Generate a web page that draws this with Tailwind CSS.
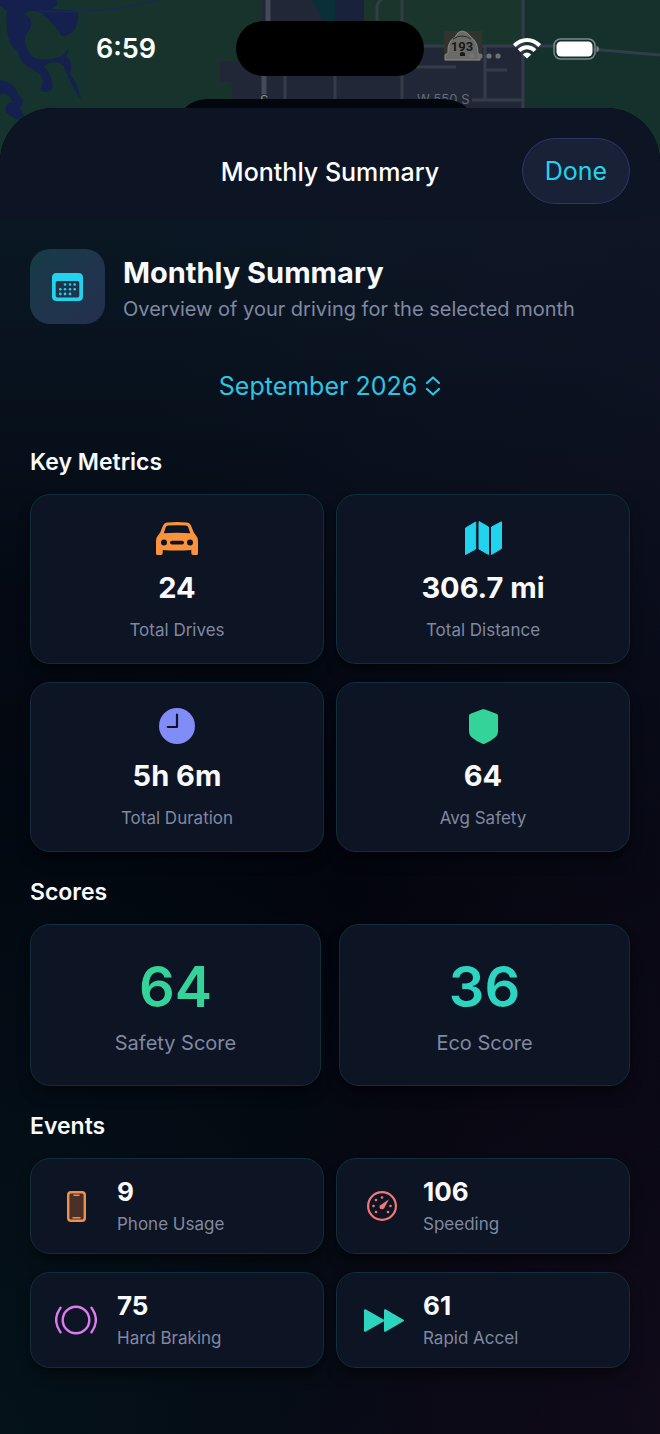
<!DOCTYPE html>
<html lang="en">
<head>
    <meta charset="UTF-8">
    <meta name="viewport" content="width=device-width, initial-scale=1.0">
    <title>Monthly Summary</title>
    <script src="https://cdn.jsdelivr.net/npm/@tailwindcss/browser@4"></script>
</head>
<body class="bg-[#14312c] font-['Inter','Liberation_Sans',sans-serif] text-slate-50">
    <div class="relative min-h-screen flex flex-col">

        <!-- Map behind the sheet -->
        <svg class="absolute inset-x-0 top-0 w-full h-[200px]" viewBox="0 0 660 200" preserveAspectRatio="xMidYMin slice" aria-hidden="true">
            <rect width="660" height="200" fill="#18332b"/>
            <path d="M0 0h92v200H0z" fill="#17332d"/>
            <path d="M525 0h135v200H525z" fill="#14312c"/>
            <path d="M0 0H56Q60 6 50 9L78 11Q80 34 62 36Q54 24 42 13Q30 8 24 14Q38 22 26 34Q22 46 34 58Q48 62 62 56L69 48L66 57Q74 62 70 74Q78 84 81 100Q70 84 64 66Q56 58 44 66Q54 78 52 90Q44 94 40 90Q48 78 34 70Q20 64 18 52Q8 44 7 30Q6 18 7 10L0 6Z" fill="#14204d"/>
            <path d="M0 80Q14 82 18 94Q26 100 20 108L27 122Q14 120 6 112Q4 104 12 102Q10 92 0 94Z" fill="#14204d"/>
            <path d="M40 11Q110 14 158 0" stroke="#172a52" stroke-width="1.5" fill="none"/>
            <path d="M220 61H262V0H364V45H525V140H245Q230 98 232 82H220Z" fill="#212736"/>
            <path d="M364 0H525V45H364Z" fill="#1a352b"/>
            <path d="M312 0H335V30H328Z" fill="#0b2f39"/>
            <path d="M335 0H364V45H335Z" fill="#19223a"/>
            <g stroke="#343c49" stroke-width="3" fill="none">
                <path d="M268 0V62L264 72V94" stroke="#454a58" stroke-width="5"/>
                <path d="M285 70V100M335 70V100M402 0V100M377 30V6Q378 1 382 0"/>
                <path d="M523 0V130M402 46H555L660 55M402 67H456M485 46V100M485 70H507M472 100H523"/>
            </g>
            <text x="417" y="104" font-size="13" fill="#666c79">W 550 S</text>
            <text x="260" y="105" font-size="13" fill="#8b8f99">S</text>
            <!-- Highway 193 shield -->
            <rect x="444" y="31" width="38" height="30" fill="#31332f"/>
            <path d="M445 60V55L448 53Q447 42 455 37Q458 31 462 31Q467 31 471 37Q478 42 478 53L480 55V60Z" fill="#6a6b68" stroke="#888984"/>
            <path d="M453 39Q462 33 471 39" stroke="#2b2c2b" fill="none"/>
            <text x="462" y="51" font-size="13" font-weight="700" font-family="Roboto" text-anchor="middle" fill="#171817">193</text>
            <path d="M460 56V53Q462 51 465 53V56Z" fill="#171817"/>
            <!-- Sheet stacked underneath -->
            <path d="M182 112Q190 99 210 99H440Q462 99 470 112Z" fill="#02070e"/>
        </svg>

        <!-- Status bar -->
        <div class="relative grid grid-cols-[1fr_188px_1fr] items-center pt-[21px] pb-8">
            <div class="pl-4 text-center text-[27px] leading-8 font-semibold text-white">6:59</div>
            <div class="h-[55px] rounded-full bg-black"></div>
            <div class="flex items-center justify-center gap-3 pr-4">
                <svg class="w-8 h-2 mt-3.5" viewBox="0 0 32 8" fill="#6d7478" aria-hidden="true">
                    <circle cx="3" cy="4" r="2.6"/><circle cx="11" cy="4" r="2.6"/><circle cx="20" cy="4" r="2.6"/><circle cx="29" cy="4" r="2.6"/>
                </svg>
                <svg class="w-7 h-[21px]" viewBox="0 0 28 21" fill="none" stroke="#fff" stroke-width="4" aria-label="Wi-Fi">
                    <path d="M1.3 7.6Q7 2 14 2T26.7 7.6"/>
                    <path d="M6 12.6Q9.500 9.300 14 9.300T22 12.600"/>
                    <path d="M14 20.500L9.800 16.400Q14 12.800 18.200 16.400Z" fill="#fff" stroke="none"/>
                </svg>
                <svg class="w-[46px] h-[22px]" viewBox="0 0 46 22" aria-label="Battery full">
                    <rect x="1" y="1" width="41" height="20" rx="6.5" fill="none" stroke="#77888a" stroke-width="1.5"/>
                    <rect x="3.5" y="3.5" width="36" height="15" rx="4.5" fill="#fff"/>
                    <path d="M43.5 7.5Q46 8.500 46 11T43.500 14.500Z" fill="#77888a"/>
                </svg>
            </div>
        </div>

        <!-- Sheet -->
        <div class="relative grow rounded-t-[54px] overflow-hidden bg-[#02040c]">
            <header class="grid grid-cols-[1fr_auto_1fr] items-center px-[30px] pt-[30px] pb-4 bg-[#0d1423]">
                <h1 class="col-start-2 pt-0.5 text-[25px] leading-8 font-medium text-white">Monthly Summary</h1>
                <button type="button" class="justify-self-end w-[108px] h-[66px] pt-0.5 rounded-full border border-[#2a3866] bg-[#192136] text-[25px] text-[#22d3ee]">Done</button>
            </header>

            <main class="px-[30px] pt-[29px] pb-[66px] bg-[radial-gradient(ellipse_at_100%_0%,#13122699,transparent_55%),radial-gradient(ellipse_at_100%_100%,#100a19,transparent_45%),radial-gradient(ellipse_at_0%_100%,#04121a,transparent_50%),linear-gradient(180deg,#0a1824_0%,#040913_32%,#02040c_55%,#060912_100%)]">
                <div class="flex items-center gap-[18px]">
                    <div class="size-[75px] shrink-0 rounded-[20px] bg-linear-to-br from-[#153c46] to-[#252e50] flex items-center justify-center">
                        <svg class="w-[31px] h-7" viewBox="0 0 31 28" fill="#22d3ee" aria-hidden="true">
                            <path fill-rule="evenodd" d="M4.5 0H26.5Q31 0 31 4.5V23.5Q31 28 26.5 28H4.5Q0 28 0 23.5V4.5Q0 0 4.5 0ZM5.5 8Q3.7 8 3.7 9.8V22.7Q3.7 24.5 5.5 24.5H25.5Q27.3 24.5 27.3 22.7V9.8Q27.3 8 25.5 8Z"/>
                            <g>
                                <circle cx="13" cy="11.5" r="1.3"/><circle cx="18" cy="11.5" r="1.3"/><circle cx="22.7" cy="11.5" r="1.3"/>
                                <circle cx="8.3" cy="16.2" r="1.3"/><circle cx="13" cy="16.2" r="1.3"/><circle cx="18" cy="16.2" r="1.3"/><circle cx="22.7" cy="16.2" r="1.3"/>
                                <circle cx="8.3" cy="20.9" r="1.3"/><circle cx="13" cy="20.9" r="1.3"/><circle cx="18" cy="20.9" r="1.3"/>
                            </g>
                        </svg>
                    </div>
                    <div>
                        <h2 class="pt-1 text-[29px] leading-9 font-bold">Monthly Summary</h2>
                        <p class="mt-1 text-[20px] leading-7 text-[#8089a0]">Overview of your driving for the selected month</p>
                    </div>
                </div>

                <div class="mt-[42px] flex items-center justify-center gap-2 text-[#2cc5e0]">
                    <label for="month" class="sr-only">Month</label>
                    <select id="month" class="appearance-none field-sizing-content h-10 bg-transparent text-[25px] leading-10">
                        <option>September 2026</option>
                    </select>
                    <svg class="w-4 h-5" viewBox="0 0 16 20" fill="none" stroke="currentColor" stroke-width="2.2" stroke-linecap="round" stroke-linejoin="round" aria-hidden="true">
                        <path d="M2 7L8 1.500L14 7M2 13L8 18.500L14 13"/>
                    </svg>
                </div>

                <section class="mt-10">
                    <h3 class="text-[23px] leading-8 font-semibold">Key Metrics</h3>
                    <div class="mt-4 grid grid-cols-2 gap-x-3 gap-y-[18px] text-center">
                        <div class="rounded-[20px] border border-[#102f3a] bg-[#0d1423] px-[22px] pt-[23px] pb-[21px] shadow-lg shadow-black/40">
                            <div class="h-10 flex items-center justify-center">
                                <svg class="w-[42px] h-[33px]" viewBox="0 0 42 33" fill="#fb923c" aria-hidden="true">
                                    <path fill-rule="evenodd" d="M2.5 12.800L4 11L6.800 4Q8 .8 11.500 .4Q21-.4 30.500 .4Q34 .8 35.200 4L38 11L39.500 12.800Q42 15.500 42 19V31.500Q42 33 40.500 33H37Q35.300 33 35.300 31.300V28Q21 29 6.700 28V31.300Q6.700 33 5 33H1.500Q0 33 0 31.500V19Q0 15.500 2.500 12.800ZM7.800 11.300Q21 10.300 34.200 11.300L32.200 5Q31.700 3.800 30 3.600Q21 3 12 3.600Q10.300 3.800 9.800 5ZM8 17.500A3 3 0 1 0 8 23.500A3 3 0 1 0 8 17.500ZM34 17.500A3 3 0 1 0 34 23.500A3 3 0 1 0 34 17.500ZM16 18.700Q14 18.700 14 20.600T16 22.500H26Q28 22.500 28 20.600T26 18.700Z"/>
                                </svg>
                            </div>
                            <div class="mt-3 text-[29px] leading-9 font-bold">24</div>
                            <div class="mt-3 text-[17px] leading-6 text-[#8089a0]">Total Drives</div>
                        </div>
                        <div class="rounded-[20px] border border-[#102f3a] bg-[#0d1423] px-[22px] pt-[23px] pb-[21px] shadow-lg shadow-black/40">
                            <div class="h-10 flex items-center justify-center">
                                <svg class="w-[37px] h-[34px]" viewBox="0 0 37 34" fill="#22d3ee" stroke="#22d3ee" stroke-linejoin="round" aria-hidden="true">
                                    <path d="M.5 7L10.700 1V28L.5 33.500ZM14 .5L23.500 6V33.500L14 28ZM26.500 6L36.500 .8V27.500L26.500 33.500Z"/>
                                </svg>
                            </div>
                            <div class="mt-3 text-[29px] leading-9 font-bold">306.7 mi</div>
                            <div class="mt-3 text-[17px] leading-6 text-[#8089a0]">Total Distance</div>
                        </div>
                        <div class="rounded-[20px] border border-[#102f3a] bg-[#0d1423] px-[22px] pt-[23px] pb-[21px] shadow-lg shadow-black/40">
                            <div class="h-10 flex items-center justify-center">
                                <svg class="size-9" viewBox="0 0 36 36" aria-hidden="true">
                                    <circle cx="18" cy="18" r="18" fill="#818cf8"/>
                                    <path d="M18 6.5V19H8.800" fill="none" stroke="#0d1423" stroke-width="2.2" stroke-linecap="round" stroke-linejoin="round"/>
                                </svg>
                            </div>
                            <div class="mt-3 text-[29px] leading-9 font-bold">5h 6m</div>
                            <div class="mt-3 text-[17px] leading-6 text-[#8089a0]">Total Duration</div>
                        </div>
                        <div class="rounded-[20px] border border-[#102f3a] bg-[#0d1423] px-[22px] pt-[23px] pb-[21px] shadow-lg shadow-black/40">
                            <div class="h-10 flex items-center justify-center">
                                <svg class="w-[29px] h-[35px]" viewBox="0 0 29 35" fill="#34d399" aria-hidden="true">
                                    <path d="M13.5 .3Q14.500 0 15.500 .3L27.500 4.700Q29 5.300 29 7V22Q29 26 26 28.500Q21.500 32.500 15.500 34.800Q14.500 35.200 13.500 34.800Q7.500 32.500 3 28.500Q0 26 0 22V7Q0 5.300 1.500 4.700Z"/>
                                </svg>
                            </div>
                            <div class="mt-3 text-[29px] leading-9 font-bold">64</div>
                            <div class="mt-3 text-[17px] leading-6 text-[#8089a0]">Avg Safety</div>
                        </div>
                    </div>
                </section>

                <section class="mt-6">
                    <h3 class="text-[23px] leading-8 font-semibold">Scores</h3>
                    <div class="mt-4 grid grid-cols-2 gap-[18px] text-center">
                        <div class="rounded-[20px] border border-[#102f3a] bg-[#0d1423] px-7 pt-[29px] pb-[27px] shadow-lg shadow-black/40">
                            <div class="text-[56px] leading-[66px] font-semibold text-[#34d399]">64</div>
                            <div class="mt-2 text-[20px] leading-[30px] text-[#8089a0]">Safety Score</div>
                        </div>
                        <div class="rounded-[20px] border border-[#102f3a] bg-[#0d1423] px-7 pt-[29px] pb-[27px] shadow-lg shadow-black/40">
                            <div class="text-[56px] leading-[66px] font-semibold text-[#2dd4bf]">36</div>
                            <div class="mt-2 text-[20px] leading-[30px] text-[#8089a0]">Eco Score</div>
                        </div>
                    </div>
                </section>

                <section class="mt-6">
                    <h3 class="text-[23px] leading-8 font-semibold">Events</h3>
                    <div class="mt-4 grid grid-cols-2 gap-x-3 gap-y-[18px]">
                        <div class="rounded-[20px] border border-[#102f3a] bg-[#0d1423] px-[18px] py-[17px] flex items-center gap-[14px] shadow-lg shadow-black/40">
                            <div class="w-[54px] flex justify-center">
                                <svg class="w-[19px] h-[31px]" viewBox="0 0 19 31" stroke="#f0914a" aria-hidden="true">
                                    <rect x="1.2" y="1.2" width="16.6" height="28.6" rx="2.8" fill="#4a3029" stroke-width="2.4"/>
                                    <path d="M7 4.300H12M6 26.800H13" stroke-width="1.5" stroke-linecap="round"/>
                                </svg>
                            </div>
                            <div>
                                <div class="text-[26px] leading-8 font-bold">9</div>
                                <div class="mt-1 text-[17px] leading-6 text-[#8089a0]">Phone Usage</div>
                            </div>
                        </div>
                        <div class="rounded-[20px] border border-[#102f3a] bg-[#0d1423] px-[18px] py-[17px] flex items-center gap-[14px] shadow-lg shadow-black/40">
                            <div class="w-[54px] flex justify-center">
                                <svg class="size-[30px]" viewBox="0 0 30 30" fill="#f27878" aria-hidden="true">
                                    <circle cx="15" cy="15" r="13.9" fill="none" stroke="#f27878" stroke-width="2.2"/>
                                    <path d="M22 8.200L17.200 17.200Q15.500 19 13.200 17.800Q11.500 15.800 13.300 14.200Z"/>
                                    <circle cx="15" cy="6.5" r="1.3"/><circle cx="9" cy="9" r="1.3"/><circle cx="6.5" cy="15" r="1.3"/>
                                    <circle cx="9" cy="21" r="1.3"/><circle cx="21" cy="21" r="1.3"/><circle cx="23.5" cy="15" r="1.3"/>
                                </svg>
                            </div>
                            <div>
                                <div class="text-[26px] leading-8 font-bold">106</div>
                                <div class="mt-1 text-[17px] leading-6 text-[#8089a0]">Speeding</div>
                            </div>
                        </div>
                        <div class="rounded-[20px] border border-[#102f3a] bg-[#0d1423] px-[18px] py-[17px] flex items-center gap-[14px] shadow-lg shadow-black/40">
                            <div class="w-[54px] flex justify-center">
                                <svg class="w-[42px] h-[30px]" viewBox="0 0 42 30" fill="none" stroke="#dc7af0" stroke-width="2.4" stroke-linecap="round" aria-hidden="true">
                                    <circle cx="21" cy="15" r="13.3"/>
                                    <path d="M5.5 2.800Q-3.200 15 5.500 27.200M36.500 2.800Q45.200 15 36.500 27.200"/>
                                </svg>
                            </div>
                            <div>
                                <div class="text-[26px] leading-8 font-bold">75</div>
                                <div class="mt-1 text-[17px] leading-6 text-[#8089a0]">Hard Braking</div>
                            </div>
                        </div>
                        <div class="rounded-[20px] border border-[#102f3a] bg-[#0d1423] px-[18px] py-[17px] flex items-center gap-[14px] shadow-lg shadow-black/40">
                            <div class="w-[54px] flex justify-center">
                                <svg class="w-11 h-[23px]" viewBox="-4 0 44 23" fill="#2dd4bf" stroke="#2dd4bf" stroke-width="2" stroke-linejoin="round" aria-hidden="true">
                                    <path d="M1 1.200L19.500 11.500L1 21.800ZM21 1.200L39 11.500L21 21.800Z"/>
                                </svg>
                            </div>
                            <div>
                                <div class="text-[26px] leading-8 font-bold">61</div>
                                <div class="mt-1 text-[17px] leading-6 text-[#8089a0]">Rapid Accel</div>
                            </div>
                        </div>
                    </div>
                </section>
            </main>
        </div>
    </div>
</body>
</html>
